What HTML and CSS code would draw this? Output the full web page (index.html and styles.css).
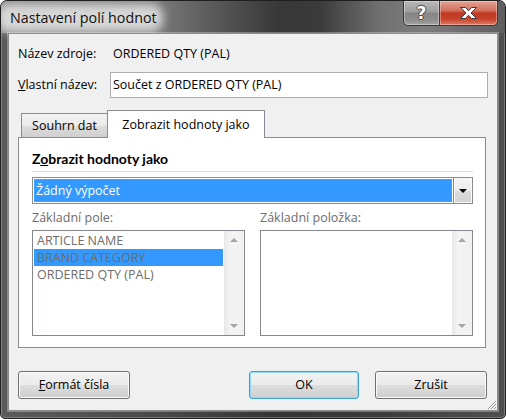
FILE: index.html
```html
<!DOCTYPE html>
<html lang="cs">
<head>
<meta charset="utf-8">
<title>Nastavení polí hodnot</title>
<link rel="stylesheet" href="styles.css">
</head>
<body>
<div class="window">
  <div class="titlebar">
    <div class="title"><span class="glow"></span><span class="title-text">Nastavení polí hodnot</span></div>
    <div class="caption-buttons">
      <div class="cbtn help"><span class="qmark">?</span></div>
      <div class="cbtn close">
        <svg width="19" height="14" viewBox="0 0 19 14"><path d="M1.5 1.5 H6.5 L9.5 4.8 L12.5 1.5 H17.5 L12 7 L17.5 12.5 H12.5 L9.5 9.2 L6.5 12.5 H1.5 L7 7 Z" fill="#fff" stroke="#3b3b3b" stroke-width="1" stroke-linejoin="round"/></svg>
      </div>
    </div>
  </div>
  <div class="client">
    <div class="row src">
      <span class="lbl">Název zdroje:</span>
      <span class="val">ORDERED QTY (PAL)</span>
    </div>
    <div class="row name">
      <span class="lbl"><u>V</u>lastní název:</span>
      <div class="input">Součet z ORDERED QTY (PAL)</div>
    </div>
    <div class="tabs">
      <div class="tab">Souhrn dat</div>
      <div class="tab active">Zobrazit hodnoty jako</div>
    </div>
    <div class="panel">
      <div class="heading">Z<u>o</u>brazit hodnoty jako</div>
      <div class="sep"></div>
      <div class="combo">
        <div class="combo-field"><span class="combo-text">Žádný výpočet</span></div>
        <div class="combo-btn"><svg width="8" height="4" viewBox="0 0 8 4"><path d="M0 0 H8 L4 4 Z" fill="#000"/></svg></div>
      </div>
      <div class="lists">
        <div class="col">
          <div class="cap">Základní pole:</div>
          <div class="listbox">
            <div class="items">
              <div class="item">ARTICLE NAME</div>
              <div class="item sel">BRAND CATEGORY</div>
              <div class="item">ORDERED QTY (PAL)</div>
            </div>
            <div class="scrollbar">
              <div class="sarrow"><svg width="8" height="4" viewBox="0 0 8 4"><path d="M0 4 H8 L4 0 Z" fill="#a4a4a4"/></svg></div>
              <div class="sarrow"><svg width="8" height="4" viewBox="0 0 8 4"><path d="M0 0 H8 L4 4 Z" fill="#a4a4a4"/></svg></div>
            </div>
          </div>
        </div>
        <div class="col">
          <div class="cap">Základní položka:</div>
          <div class="listbox">
            <div class="items"></div>
            <div class="scrollbar">
              <div class="sarrow"><svg width="8" height="4" viewBox="0 0 8 4"><path d="M0 4 H8 L4 0 Z" fill="#a4a4a4"/></svg></div>
              <div class="sarrow"><svg width="8" height="4" viewBox="0 0 8 4"><path d="M0 0 H8 L4 4 Z" fill="#a4a4a4"/></svg></div>
            </div>
          </div>
        </div>
      </div>
    </div>
    <div class="buttons">
      <div class="btn"><u>F</u>ormát čísla</div>
      <div class="btn default">OK</div>
      <div class="btn cancel">Zrušit</div>
    </div>
    <svg class="grip" width="11" height="11" viewBox="0 0 11 11"><path d="M10 2 L2 10 M10 5 L5 10 M10 8 L8 10" stroke="#9a9a9a" stroke-width="1"/></svg>
  </div>
</div>
</body>
</html>
```
FILE: styles.css
```css
html, body {
  margin: 0;
  padding: 0;
  background: #ffffff;
}
body {
  font-family: "Open Sans", "Noto Sans", sans-serif;
  font-size: 12.5px;
  color: #000;
}
.window {
  position: relative;
  width: 506px;
  height: 419px;
  box-sizing: border-box;
  border: 1px solid #1f1f1f;
  border-radius: 7px 7px 5px 5px;
  background: linear-gradient(to right, #5a5a5a 0%, #4a4a4a 30%, #353535 55%, #3c3c3c 75%, #505050 100%);
  box-shadow: inset 0 0 0 1px rgba(255,255,255,0.25);
  display: flex;
  flex-direction: column;
  overflow: hidden;
}
.titlebar {
  height: 32px;
  flex: none;
  display: flex;
  justify-content: space-between;
  align-items: flex-start;
  background: linear-gradient(to right, #8a8a8a 0%, #7c7c7c 30%, #5a5a5a 42%, #383838 55%, #3a3a3a 63%, #707070 75%, #7d7d7d 84%, #5e5e5e 100%);
}
.title {
  position: relative;
  padding: 7px 0 0 9px;
  line-height: 20px;
  font-size: 14.3px;
  color: #111;
}
.glow {
  position: absolute;
  left: -4px;
  top: 3px;
  width: 166px;
  height: 28px;
  border-radius: 12px;
  background: rgba(228,228,228,0.88);
  filter: blur(5px);
}
.title-text {
  position: relative;
}
.caption-buttons {
  display: flex;
  margin-right: 7px;
}
.cbtn {
  height: 25px;
  box-sizing: border-box;
  border: 1px solid #3a3a3a;
  border-top: none;
  display: flex;
  align-items: center;
  justify-content: center;
  box-shadow: inset 0 0 0 1px rgba(255,255,255,0.35);
}
.help {
  width: 36px;
  border-radius: 0 0 0 5px;
  border-right: none;
  background: linear-gradient(to bottom, #b8b8b8 0%, #9d9d9d 45%, #858585 50%, #8e8e8e 80%, #a6a6a6 100%);
}
.qmark {
  font-family: "DejaVu Sans", sans-serif;
  font-weight: bold;
  font-size: 17px;
  line-height: 20px;
  color: #fff;
  text-shadow: 1px 0 0 #4a4a4a, -1px 0 0 #4a4a4a, 0 1px 0 #4a4a4a, 0 -1px 0 #4a4a4a;
}
.close {
  width: 59px;
  border-radius: 0 0 5px 0;
  background: linear-gradient(to bottom, #e3a393 0%, #d2705d 40%, #c13b24 50%, #c7422b 75%, #dc7b62 100%);
}
.close svg {
  display: block;
}
.client {
  position: relative;
  flex: 1;
  margin: 0 7px 7px 7px;
  border: 1px solid #8c8c8c;
  box-shadow: 0 0 0 1px rgba(255,255,255,0.3);
  background: #f0f0f0;
  padding: 12px 9px 0 9px;
  display: flex;
  flex-direction: column;
}
.row {
  display: flex;
  align-items: center;
}
.row.src {
  height: 16px;
  line-height: 16px;
}
.row.name {
  margin-top: 10px;
  height: 26px;
}
.lbl {
  width: 92px;
  flex: none;
  line-height: 16px;
}
.val {
  padding-left: 3px;
}
.input {
  flex: 1;
  height: 26px;
  box-sizing: border-box;
  border: 1px solid #abadb3;
  background: #fff;
  padding: 0 2px;
  line-height: 24px;
}
.tabs {
  display: flex;
  align-items: flex-end;
  height: 28px;
  margin-top: 12px;
  margin-bottom: -1px;
  padding-left: 3px;
  position: relative;
  z-index: 1;
}
.tab {
  box-sizing: border-box;
  border: 1px solid #898c95;
  border-bottom: none;
  text-align: center;
  line-height: 16px;
}
.tab:not(.active) {
  width: 86px;
  height: 24px;
  margin-bottom: 1px;
  padding-top: 4px;
  border-right: none;
  background: linear-gradient(to bottom, #f2f2f2 0%, #ebebeb 50%, #dddddd 51%, #cfcfcf 100%);
}
.tab.active {
  width: 158px;
  height: 28px;
  padding-top: 6px;
  background: #fff;
}
.panel {
  height: 211px;
  box-sizing: border-box;
  margin-right: 2px;
  border: 1px solid #898c95;
  background: #fff;
  padding: 13px 12px 0 13px;
  display: flex;
  flex-direction: column;
}
.heading {
  font-family: "Lato", "Open Sans", sans-serif;
  font-weight: bold;
  font-size: 14px;
  line-height: 16px;
}
.sep {
  margin-top: 4px;
  height: 1px;
  background: #d5dfe5;
}
.combo {
  margin-top: 5px;
  height: 27px;
  box-sizing: border-box;
  border: 1px solid #8f8f8f;
  background: #fff;
  display: flex;
}
.combo-field {
  flex: 1;
  margin: 1px;
  background: #3399ff;
  outline: 1px dotted #e8891d;
  outline-offset: -1px;
  display: flex;
  align-items: center;
  padding-left: 2px;
}
.combo-text {
  color: #fff;
  line-height: 16px;
}
.combo-btn {
  width: 20px;
  box-sizing: border-box;
  border: 1px solid #8a8a8a;
  margin: -1px -1px -1px 0;
  background: linear-gradient(to bottom, #f4f4f4 0%, #ececec 50%, #dcdcdc 51%, #d2d2d2 100%);
  box-shadow: inset 0 0 0 1px #fafafa;
  display: flex;
  align-items: center;
  justify-content: center;
}
.combo-btn svg, .sarrow svg {
  display: block;
}
.lists {
  display: grid;
  grid-template-columns: 1fr 1fr;
  column-gap: 15px;
}
.cap {
  margin-top: 6px;
  line-height: 16px;
  color: #6d6d6d;
}
.listbox {
  margin-top: 4px;
  height: 106px;
  box-sizing: border-box;
  border: 1px solid #828790;
  background: #fff;
  display: flex;
}
.items {
  flex: 1;
  padding: 1px 1px 0 1px;
}
.item {
  height: 17px;
  line-height: 17px;
  padding-left: 3px;
  color: #6d6d6d;
  white-space: nowrap;
}
.item.sel {
  background: #3399ff;
}
.scrollbar {
  width: 20px;
  background: linear-gradient(to right, #e8e8e8 0%, #f4f4f4 30%, #f1f1f1 100%);
  display: flex;
  flex-direction: column;
  justify-content: space-between;
}
.sarrow {
  height: 18px;
  display: flex;
  align-items: center;
  justify-content: center;
}
.buttons {
  display: flex;
  margin-top: 23px;
}
.btn {
  height: 28px;
  width: 112px;
  box-sizing: border-box;
  border: 1px solid #707070;
  border-radius: 3px;
  background: linear-gradient(to bottom, #f2f2f2 0%, #ebebeb 50%, #dddddd 51%, #cfcfcf 100%);
  box-shadow: inset 0 0 0 1px #fbfbfb;
  display: flex;
  align-items: center;
  justify-content: center;
  line-height: 16px;
}
.btn.default {
  width: 110px;
  margin-left: auto;
  border-color: #3c9fd8;
  box-shadow: inset 0 0 0 1px #8edaf8;
}
.btn.cancel {
  margin-left: 16px;
  margin-right: 1px;
}
.grip {
  position: absolute;
  right: 0;
  bottom: 0;
}
```
